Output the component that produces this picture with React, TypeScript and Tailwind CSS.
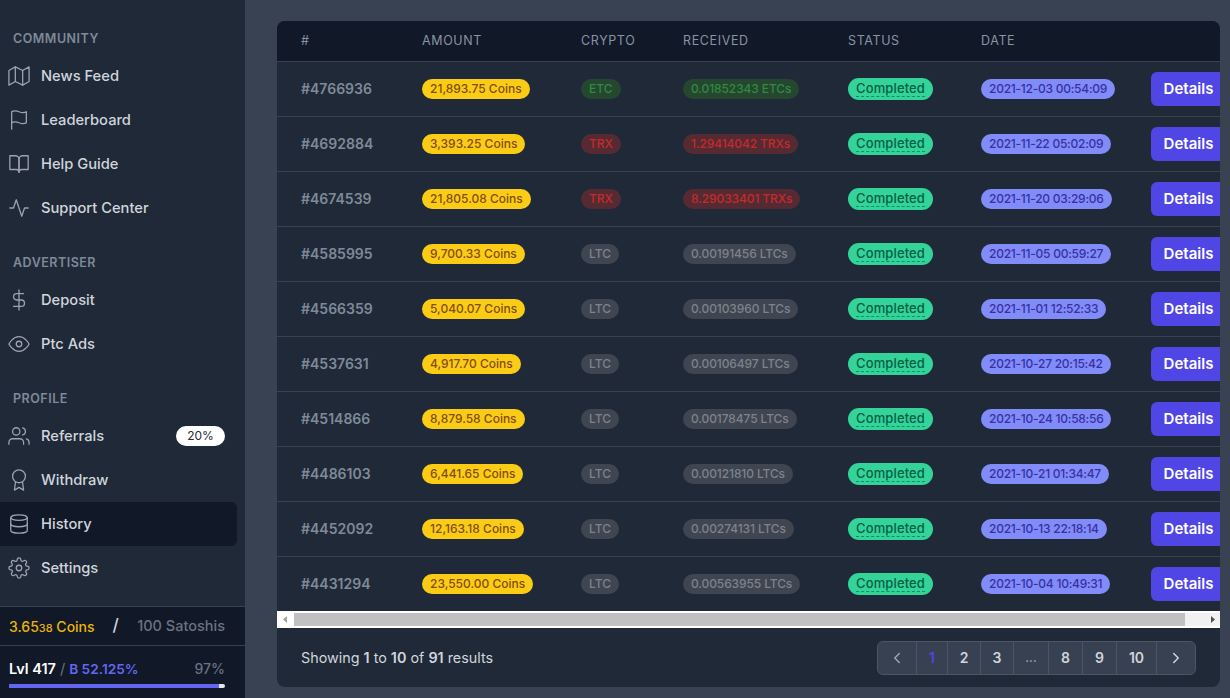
import React from "react";
import { FiMap, FiFlag, FiBookOpen, FiActivity, FiDollarSign, FiEye, FiUsers, FiAward, FiDatabase, FiSettings, FiChevronLeft, FiChevronRight } from "react-icons/fi";

type Row = { id: string; amount: string; crypto: "ETC" | "TRX" | "LTC"; received: string; date: string };
const rows: Row[] = [
  { id: "#4766936", amount: "21,893.75 Coins", crypto: "ETC", received: "0.01852343 ETCs", date: "2021-12-03 00:54:09" },
  { id: "#4692884", amount: "3,393.25 Coins", crypto: "TRX", received: "1.29414042 TRXs", date: "2021-11-22 05:02:09" },
  { id: "#4674539", amount: "21,805.08 Coins", crypto: "TRX", received: "8.29033401 TRXs", date: "2021-11-20 03:29:06" },
  { id: "#4585995", amount: "9,700.33 Coins", crypto: "LTC", received: "0.00191456 LTCs", date: "2021-11-05 00:59:27" },
  { id: "#4566359", amount: "5,040.07 Coins", crypto: "LTC", received: "0.00103960 LTCs", date: "2021-11-01 12:52:33" },
  { id: "#4537631", amount: "4,917.70 Coins", crypto: "LTC", received: "0.00106497 LTCs", date: "2021-10-27 20:15:42" },
  { id: "#4514866", amount: "8,879.58 Coins", crypto: "LTC", received: "0.00178475 LTCs", date: "2021-10-24 10:58:56" },
  { id: "#4486103", amount: "6,441.65 Coins", crypto: "LTC", received: "0.00121810 LTCs", date: "2021-10-21 01:34:47" },
  { id: "#4452092", amount: "12,163.18 Coins", crypto: "LTC", received: "0.00274131 LTCs", date: "2021-10-13 22:18:14" },
  { id: "#4431294", amount: "23,550.00 Coins", crypto: "LTC", received: "0.00563955 LTCs", date: "2021-10-04 10:49:31" },
];

const cryptoClass: Record<Row["crypto"], string> = {
  ETC: "bg-[#26472f] text-[#2f8a3f]",
  TRX: "bg-[#552a33] text-[#c52a2a]",
  LTC: "bg-[#3f4651] text-[#7d838d]",
};

function Item({ icon: Icon, label, active, badge }: { icon: React.ElementType; label: string; active?: boolean; badge?: string }) {
  return (
    <div className={`flex h-11 items-center pl-2 pr-3 rounded-r-md ${active ? "bg-[#111827]" : ""}`}>
      <Icon size={22} strokeWidth={1.4} className="text-[#9ca3af] shrink-0" />
      <span className="ml-[11px] text-[14.7px] font-medium text-[#d1d5db]">{label}</span>
      {badge && (
        <span className="ml-auto flex h-5 w-[49px] items-center justify-center rounded-full bg-white text-xs text-[#1f2937]">{badge}</span>
      )}
    </div>
  );
}

function Label({ children }: { children: React.ReactNode }) {
  return <div className="h-4 pl-[13px] text-[12.5px] leading-4 font-semibold tracking-[0.04em] text-[#7f8a99]">{children}</div>;
}

const cols = "grid grid-cols-[121px_159px_102px_165px_133px_170px_69px] pl-6 items-center";
const pill = "inline-flex h-5 items-center rounded-full px-2 text-xs font-medium whitespace-nowrap";

const pages: [string, string, string?][] = [
  ["w-[39px]", "<"],
  ["w-[31px]", "1", "text-[#4f46e5]"],
  ["w-[33px]", "2"],
  ["w-[33px]", "3"],
  ["w-[35px]", "...", "text-[#9ca3af]"],
  ["w-[34px]", "8"],
  ["w-[34px]", "9"],
  ["w-[40px]", "10"],
  ["w-[38px]", ">"],
];

export default function App() {
  return (
    <div className="flex h-screen overflow-hidden bg-[#394252] font-['Inter','Liberation_Sans',sans-serif]">
      <aside className="flex w-[245px] shrink-0 flex-col bg-[#1f2937]">
        <div className="flex flex-1 flex-col pt-[31px] pr-2">
          <Label>COMMUNITY</Label>
          <div className="mt-[7px]">
            <Item icon={FiMap} label="News Feed" />
            <Item icon={FiFlag} label="Leaderboard" />
            <Item icon={FiBookOpen} label="Help Guide" />
            <Item icon={FiActivity} label="Support Center" />
          </div>
          <div className="mt-[25px]"><Label>ADVERTISER</Label></div>
          <div className="mt-[7px]">
            <Item icon={FiDollarSign} label="Deposit" />
            <Item icon={FiEye} label="Ptc Ads" />
          </div>
          <div className="mt-[25px]"><Label>PROFILE</Label></div>
          <div className="mt-[7px]">
            <Item icon={FiUsers} label="Referrals" badge="20%" />
            <Item icon={FiAward} label="Withdraw" />
            <Item icon={FiDatabase} label="History" active />
            <Item icon={FiSettings} label="Settings" />
          </div>
        </div>
        <div className="flex h-[40px] items-center border-y border-[#374151] bg-[#111827] pl-[9px] pr-5 text-[14.5px] font-medium">
          <span className="text-[14px] text-[#eab308]">3.65<span className="text-[11px]">38</span> Coins</span>
          <span className="ml-[18px] text-[#d1d5db] text-[17px]">/</span>
          <span className="ml-auto text-[#6b7280]">100 Satoshis</span>
        </div>
        <div className="h-[52px] bg-[#111827] pl-[9px] pr-5 pt-[14px]">
          <div className="flex items-center text-[14.5px] leading-[18px] font-semibold">
            <span className="text-white">Lvl 417</span>
            <span className="mx-1 font-normal text-[#6b7280]">/</span>
            <span className="text-[13.7px] text-[#6366f1]">B 52.125%</span>
            <span className="ml-auto text-[14px] font-medium text-[#6b7280]">97%</span>
          </div>
          <div className="mt-[6px] h-1 w-full overflow-hidden rounded-r-sm bg-[#e5e7eb]">
            <div className="h-full bg-[#6366f1]" style={{ width: "97%" }} />
          </div>
        </div>
      </aside>
      <main className="flex-1 pl-8 pr-[10px] pt-[21px] pb-[11px] min-w-0">
        <div className="flex h-full flex-col overflow-hidden rounded-lg bg-[#1f2937]">
          <div className={`${cols} h-[41px] shrink-0 border-b border-[#374151] bg-[#111827] text-[12.5px] tracking-[0.05em] text-[#8893a4]`}>
            <div>#</div><div>AMOUNT</div><div>CRYPTO</div><div>RECEIVED</div><div>STATUS</div><div>DATE</div><div />
          </div>
          {rows.map((r, i) => (
            <div key={r.id} className={`${cols} shrink-0 ${i === rows.length - 1 ? "h-[54px]" : "h-[55px] border-b border-[#374151]"}`}>
              <div className="text-[14px] leading-5 font-semibold text-[#7f8a99]">{r.id}</div>
              <div className="flex"><span className={`${pill} bg-[#facc15] text-[#854d0e]`}>{r.amount}</span></div>
              <div className="flex"><span className={`${pill} ${cryptoClass[r.crypto]}`}>{r.crypto}</span></div>
              <div className="flex"><span className={`${pill} tracking-[-0.1px] ${cryptoClass[r.crypto]}`}>{r.received}</span></div>
              <div className="flex">
                <span className="inline-flex h-[22px] items-center rounded-full bg-[#34d399] px-2 text-[13px] tracking-[0.01em] font-medium text-[#065f46]">
                  <span className="border-b border-dashed border-[#059669] leading-[15px]">Completed</span>
                </span>
              </div>
              <div className="flex"><span className={`${pill} tracking-[-0.25px] bg-[#818cf8] text-[#3730a3]`}>{r.date}</span></div>
              <div>
                <button className="flex h-[34px] w-[69px] items-center justify-center rounded-l-md bg-[#4f46e5] pl-[6px] text-[15px] font-semibold text-white whitespace-nowrap">Details</button>
              </div>
            </div>
          ))}
          <div className="flex h-[17px] shrink-0 items-stretch border-y-2 border-white bg-[#f1f1f1]">
            <div className="flex w-[17px] items-center justify-center bg-white">
              <svg width="5" height="7" viewBox="0 0 5 7"><path d="M4 0v7L0 3.5z" fill="#a3a3a3" /></svg>
            </div>
            <div className="w-[891px] bg-[#c1c1c1]" />
            <div className="flex flex-1 items-center justify-end pr-[4px]">
              <svg width="5" height="7" viewBox="0 0 5 7"><path d="M0 0v7l4-3.500z" fill="#505050" /></svg>
            </div>
          </div>
          <div className="flex flex-1 items-center justify-between pl-6 pr-6">
            <div className="text-[14.35px] text-[#d1d5db]">
              Showing <b className="font-semibold">1</b> to <b className="font-semibold">10</b> of <b className="font-semibold">91</b> results
            </div>
            <div className="flex h-[34px] overflow-hidden rounded-md border border-[#4b5563] bg-[#374151]">
              {pages.map(([w, t, c], i) => (
                <div key={i} className={`${w} flex items-center justify-center border-r border-[#4b5563] last:border-r-0 font-semibold ${t === "..." ? "text-xs" : "text-sm"} ${c ?? "text-[#d1d5db]"}`}>
                  {t === "<" ? <FiChevronLeft size={18} className="text-[#9ca3af]" /> : t === ">" ? <FiChevronRight size={18} className="text-[#d1d5db]" /> : t}
                </div>
              ))}
            </div>
          </div>
        </div>
      </main>
    </div>
  );
}
